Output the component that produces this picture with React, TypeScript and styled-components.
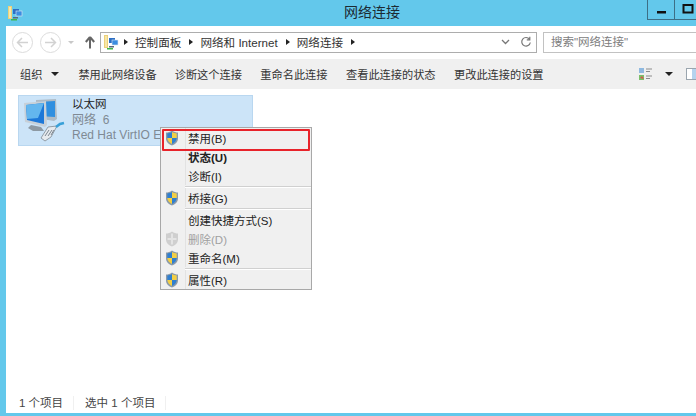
import React from "react";
import styled, { createGlobalStyle } from "styled-components";

const Global = createGlobalStyle`
  html, body { margin: 0; padding: 0; background: #fff; }
  #root { width: 696px; height: 416px; overflow: hidden; }
  * { box-sizing: border-box; }
`;
const FONT = `"Liberation Sans", "Noto Sans CJK SC", sans-serif`;

const Win = styled.div`
  width: 696px; height: 416px; background: #63c8eb; display: flex; flex-direction: column;
  font-family: ${FONT}; color: #333; position: relative; overflow: hidden;
`;
const TitleBar = styled.div`
  height: 26px; flex: none; display: flex; align-items: flex-start; position: relative; padding: 5px 0 0 7px;
`;
const Title = styled.div`
  position: absolute; left: 48px; right: 0; top: 2px; text-align: center; font-size: 14px; line-height: 21px; color: #1c2b33;
`;
const WinButtons = styled.div`
  position: absolute; left: 647px; top: 0; display: flex; width: 60px; height: 20px;
  border: 1px solid #3d6f86; border-top: none;
`;
const WinBtn = styled.div`
  width: 26px; height: 19px; flex: none; display: flex; align-items: center; justify-content: center;
  & + & { border-left: 1px solid #3d6f86; }
`;
const Body = styled.div`
  flex: 1; margin-left: 6px; margin-bottom: 3px; background: #fff; display: flex; flex-direction: column; min-height: 0;
`;
const NavBar = styled.div`
  height: 33px; flex: none; display: flex; align-items: center; padding: 0 0 1px 6px;
`;
const RoundBtn = styled.div`
  width: 21px; height: 21px; border-radius: 50%; border: 1px solid #dcdcdc; margin-right: 7px;
  display: flex; align-items: center; justify-content: center; flex: none;
`;
const SmallCaret = styled.span`
  width: 0; height: 0; border-left: 3px solid transparent; border-right: 3px solid transparent; border-top: 3px solid #c8c8c8; margin: 1px 11px 0 0; flex: none;
`;
const AddressBox = styled.div`
  width: 437px; height: 21px; margin-left: 5px; border: 1px solid #adadad; display: flex; align-items: center; padding-left: 2px;
  font-size: 11.6px; color: #333; white-space: nowrap; flex: none;
`;
const Crumb = styled.span`
  margin-right: 3px;
`;
const Arrow = styled.span`
  width: 0; height: 0; border-top: 3.5px solid transparent; border-bottom: 3.5px solid transparent; border-left: 4px solid #222; margin: 0 7px 0 5px; flex: none;
`;
const AddrTools = styled.div`
  margin-left: auto; display: flex; align-items: center; gap: 10px; padding-right: 4px;
`;
const SearchBox = styled.div`
  width: 170px; height: 21px; margin-left: 6px; border: 1px solid #c2c2c2; font-size: 11.5px; color: #7d7d7d; line-height: 19px; padding-left: 7px; white-space: nowrap; flex: none;
`;
const Toolbar = styled.div`
  height: 30px; flex: none; background: #f0f0f0; display: flex; align-items: center; font-size: 11.2px; color: #333; padding-left: 14px; position: relative; white-space: nowrap;
`;
const ToolItem = styled.span<{ $gap: number }>`
  margin-right: ${p => p.$gap}px;
`;
const ToolCaret = styled.span<{ $gap: number; $lead?: number }>`
  width: 0; height: 0; border-left: 4px solid transparent; border-right: 4px solid transparent; border-top: 4px solid #222; margin-right: ${p => p.$gap}px; margin-left: ${p => p.$lead ?? 0}px; flex: none;
`;
const ToolIcons = styled.div`
  position: absolute; left: 632px; top: 8px; display: flex; align-items: center;
`;
const Content = styled.div`
  flex: 1; min-height: 0; padding: 6px 0 0 12px;
`;
const Tile = styled.div`
  width: 235px; height: 51px; background: #cce4f8; border: 1px solid #b9d7f0; display: flex; padding: 1px 0 0 4px; overflow: hidden; white-space: nowrap;
`;
const TileText = styled.div`
  margin-left: 7px; font-size: 12px; line-height: 15.5px; display: flex; flex-direction: column; color: #7f8a94;
`;
const TileName = styled.span`
  color: #222; font-size: 11.5px;
`;
const StatusBar = styled.div`
  height: 20px; flex: none; display: flex; align-items: center; font-size: 11.5px; color: #444; padding: 0 0 0 13px;
`;
const StatusItem = styled.span`
  padding-right: 10px; margin-right: 11px; border-right: 1px solid #f0f0f0; line-height: 14px;
`;
const Menu = styled.div`
  position: absolute; left: 160px; top: 127px; width: 152px; height: 163px; background: #f0f0f0; border: 1px solid #a8a8a8;
  font-size: 11.5px; color: #222;
  display: flex; flex-direction: column;
`;
const MenuRow = styled.div<{ $bold?: boolean; $off?: boolean }>`
  height: 19px; flex: none; display: flex; align-items: center; font-weight: ${p => p.$bold ? 700 : 400}; color: ${p => p.$off ? "#a0a0a0" : "#222"};
`;
const IconCell = styled.div`
  width: 25px; height: 19px; flex: none; display: flex; align-items: center; justify-content: center; border-right: 1px solid #e2e2e2; margin-right: 2px; padding-right: 2px;
`;
const Divider = styled.div`
  height: 1px; flex: none; margin: 1px 0 1px 24px; background: #d0d0d0; box-shadow: 0 1px 0 #fff;
`;
const Highlight = styled.div`
  position: absolute; left: 162px; top: 129px; width: 148px; height: 22px; border: 2px solid #e8232a; border-radius: 1px; pointer-events: none;
`;

const Shield = ({ off }: { off?: boolean }) => (
  <svg width="14" height="16" viewBox="0 0 14 16">
    <path d="M7 .5C5 2 3 2.500 1 2.500v6C1 12 4 14.500 7 15.500c3-1 6-3.500 6-7v-6C11 2.500 9 2 7 .5z" fill={off ? "#cfcfcf" : "#8a99a8"} />
    {off ? (
      <path d="M7 2.500v11M2.500 8h9" stroke="#e4e4e4" strokeWidth="2" />
    ) : (
      <>
        <path d="M7 2C5.500 3 4 3.400 2.300 3.500V8H7z" fill="#2f7fd0" />
        <path d="M7 2c1.500 1 3 1.400 4.700 1.500V8H7z" fill="#f3cf45" />
        <path d="M2.300 8H7v6C4.500 13 2.600 11 2.300 8z" fill="#f3cf45" />
        <path d="M11.700 8H7v6c2.500-1 4.400-3 4.700-6z" fill="#2f7fd0" />
      </>
    )}
  </svg>
);

const NetFolder = ({ size = 16 }: { size?: number }) => (
  <svg width={size} height={size} viewBox="0 0 16 16">
    <path d="M1 1h4v13H1z" fill="#ecd17a" />
    <path d="M2 2h2v11H2z" fill="#f7e7a8" />
    <rect x="6" y="4" width="6" height="5" fill="#2d6fc4" />
    <rect x="9" y="6" width="6" height="5" fill="#3b8de0" stroke="#dfe8f2" strokeWidth=".6" />
    <path d="M6 12h5v1.500H6z" fill="#5a6a78" />
    <path d="M4 14h6v1.500H4z" fill="#3fb74a" />
  </svg>
);

const Monitors = () => (
  <svg width="42" height="46" viewBox="0 0 42 46" style={{ flex: "none" }}>
    <path d="M13 3l20-1 1 20-3 2-18-3z" fill="#aebbc6" />
    <path d="M15 5l17-1v16l-17-1z" fill="#2f8fe0" />
    <path d="M1 6l22-2 1 24-2 2-20-5z" fill="#c7d0d8" />
    <path d="M3 8l18-2v21L4 23z" fill="#1d78d8" />
    <path d="M3 8l18-2-6 15-11 1z" fill="#63b6ee" />
    <path d="M8 28l10 2 3 4-11 0-5-3z" fill="#8d99a3" />
    <path d="M18 41l7-11 9-1-6 11-6 4z" fill="#e6eaee" stroke="#7f8a94" strokeWidth=".8" />
    <path d="M22 39l4-6M25 39l4-6M28 38l3-5" stroke="#7c8690" strokeWidth="1" />
    <path d="M33 30l4-3 4-1" stroke="#38a0d8" strokeWidth="2.500" fill="none" />
  </svg>
);

const ViewIcon = () => (
  <svg width="16" height="14" viewBox="0 0 16 14">
    <rect x="1" y="1" width="5" height="5" fill="#8fb9e0" />
    <rect x="1" y="8" width="5" height="5" fill="#7cbf6a" />
    <path d="M2 11l2-2 2 3z" fill="#d8584f" />
    <path d="M8 2h6M8 4.500h4M8 9h6M8 11.500h4" stroke="#8c8c8c" strokeWidth="1" />
  </svg>
);

const menu = [
  { t: "禁用(B)", s: true },
  { t: "状态(U)", b: true },
  { t: "诊断(I)" },
  "d",
  { t: "桥接(G)", s: true },
  "d",
  { t: "创建快捷方式(S)" },
  { t: "删除(D)", s: true, off: true },
  { t: "重命名(M)", s: true },
  "d",
  { t: "属性(R)", s: true },
] as const;

export default function App() {
  return (
    <Win>
      <Global />
      <TitleBar>
        <NetFolder />
        <Title>网络连接</Title>
        <WinButtons>
          <WinBtn>
            <svg width="11" height="11" viewBox="0 0 11 11"><rect x="1" y="7" width="9" height="2.500" fill="#111" /></svg>
          </WinBtn>
          <WinBtn>
            <svg width="12" height="11" viewBox="0 0 12 11"><rect x="1.500" y="1" width="9" height="7.500" fill="none" stroke="#111" strokeWidth="2" /></svg>
          </WinBtn>
        </WinButtons>
      </TitleBar>
      <Body>
        <NavBar>
          <RoundBtn>
            <svg width="13" height="11" viewBox="0 0 13 11"><path d="M6 1L1.500 5.500 6 10M2 5.500h10" fill="none" stroke="#d2d2d2" strokeWidth="1.500" /></svg>
          </RoundBtn>
          <RoundBtn>
            <svg width="13" height="11" viewBox="0 0 13 11"><path d="M7 1l4.500 4.500L7 10M11 5.500H1" fill="none" stroke="#d2d2d2" strokeWidth="1.500" /></svg>
          </RoundBtn>
          <SmallCaret />
          <svg width="10" height="13" viewBox="0 0 10 13" style={{ flex: "none" }}><path d="M5 1L.8 6M5 1l4.200 5M5 1.500V12.500" fill="none" stroke="#666" strokeWidth="2" /></svg>
          <AddressBox>
            <NetFolder />
            <Arrow /><Crumb>控制面板</Crumb>
            <Arrow /><Crumb>网络和 Internet</Crumb>
            <Arrow /><Crumb>网络连接</Crumb>
            <Arrow />
            <AddrTools>
              <svg width="9" height="6" viewBox="0 0 9 6"><path d="M1 1l3.500 3.500L8 1" fill="none" stroke="#777" strokeWidth="1.300" /></svg>
              <svg width="12" height="12" viewBox="0 0 12 12"><path d="M9.500 3.200A4.300 4.300 0 1 0 10.300 6.500M9.800 .8v3H6.800" fill="none" stroke="#777" strokeWidth="1.200" /></svg>
            </AddrTools>
          </AddressBox>
          <SearchBox>搜索"网络连接"</SearchBox>
        </NavBar>
        <Toolbar>
          <ToolItem $gap={9}>组织</ToolItem>
          <ToolCaret $gap={19} />
          <ToolItem $gap={18}>禁用此网络设备</ToolItem>
          <ToolItem $gap={18.5}>诊断这个连接</ToolItem>
          <ToolItem $gap={18.5}>重命名此连接</ToolItem>
          <ToolItem $gap={18.5}>查看此连接的状态</ToolItem>
          <ToolItem $gap={18.5}>更改此连接的设置</ToolItem>
          <ToolIcons>
            <ViewIcon />
            <ToolCaret $gap={13} $lead={11} />
            <svg width="14" height="14" viewBox="0 0 14 14"><rect x=".5" y="1.500" width="13" height="11" fill="#fff" stroke="#9aa5ae" /><rect x="6" y="2" width="7" height="10" fill="#b5d3ee" /></svg>
          </ToolIcons>
        </Toolbar>
        <Content>
          <Tile>
            <Monitors />
            <TileText>
              <TileName>以太网</TileName>
              <span>网络&nbsp; 6</span>
              <span>Red Hat VirtIO E</span>
            </TileText>
          </Tile>
        </Content>
        <StatusBar>
          <StatusItem>1 个项目</StatusItem>
          <StatusItem>选中 1 个项目</StatusItem>
        </StatusBar>
      </Body>
      <Menu>
        {menu.map((m, i) =>
          m === "d" ? (
            <Divider key={i} />
          ) : (
            <MenuRow key={i} $bold={"b" in m} $off={"off" in m}>
              <IconCell>{"s" in m && <Shield off={"off" in m} />}</IconCell>
              {m.t}
            </MenuRow>
          )
        )}
      </Menu>
      <Highlight />
    </Win>
  );
}
